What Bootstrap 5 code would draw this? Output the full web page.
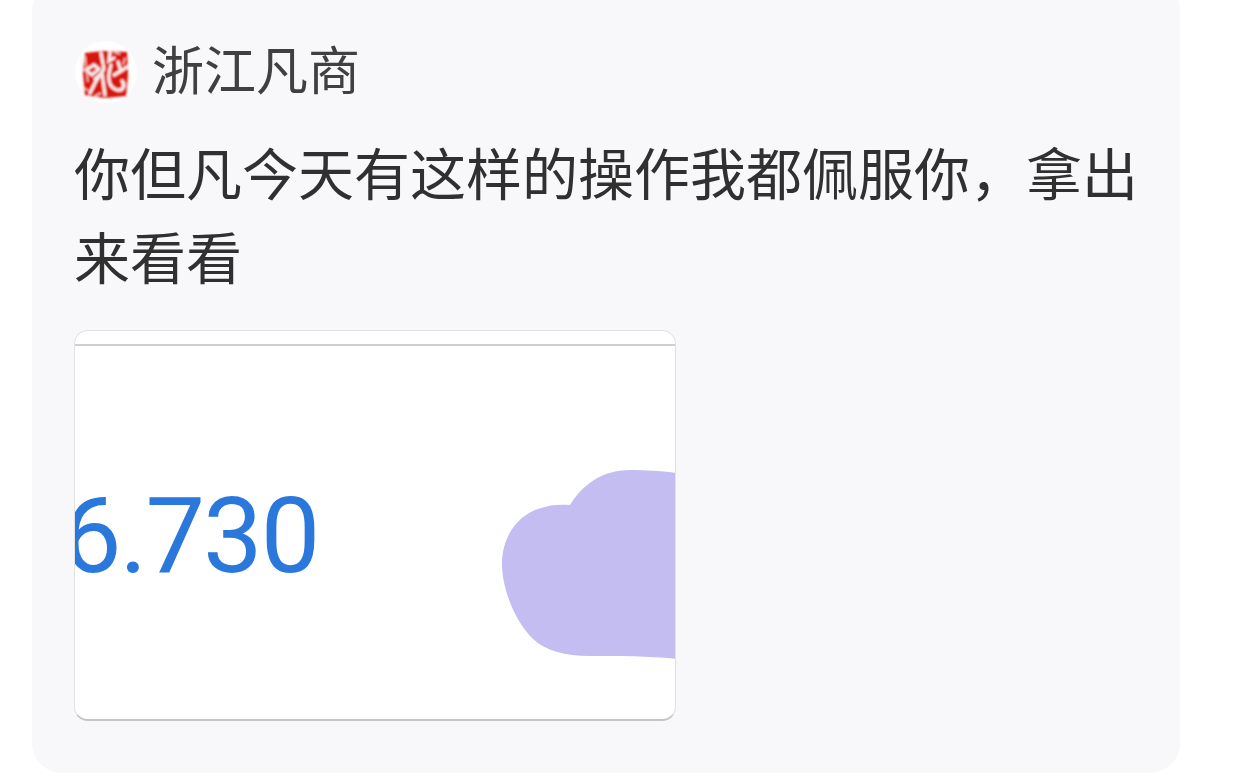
<!DOCTYPE html>
<html lang="zh-CN">
<head>
  <meta charset="UTF-8">
  <meta name="viewport" content="width=device-width, initial-scale=1">
  <title>浙江凡商</title>
  <link href="https://cdn.jsdelivr.net/npm/bootstrap@5.3.2/dist/css/bootstrap.min.css" rel="stylesheet">
  <style>
    html, body { height: 780px; overflow: hidden; }
    body {
      background: #fff;
      font-family: "Liberation Sans", "Noto Sans CJK SC", sans-serif;
      padding-left: 32px;
    }
    .post-panel {
      width: 1148px;
      height: 793px;
      margin-top: -20px;
      padding: 62px 36px 0 44px;
      background: #f8f8fb;
      border-radius: 30px;
    }
    .post-head { height: 60px; gap: 15px; margin-left: -1px; }
    .post-avatar { width: 62px; height: 62px; flex: none; }
    .post-author { font-size: 52px; line-height: 60px; color: #404040; }
    .post-text {
      margin: 32px 0 28px -2px;
      font-size: 56px;
      line-height: 84px;
      color: #303030;
    }
    .post-shot {
      position: relative;
      width: 602px;
      height: 391px;
      margin-left: -2px;
      overflow: hidden;
      background: #fff;
      border: 1px solid #e2e2e6;
      border-bottom: 2px solid #c4c4c6;
      border-radius: 14px;
    }
    .shot-line { height: 2px; margin-top: 13px; background: #cfcfd1; }
    .shot-number {
      position: absolute;
      left: -13px;
      top: 143px;
      font-family: Roboto, sans-serif;
      font-weight: 400;
      font-size: 106px;
      line-height: 125px;
      letter-spacing: -2px;
      color: #2b78dc;
    }
    .shot-cloud { position: absolute; left: 425px; top: 136px; }
  </style>
</head>
<body>

<div class="post-panel">
  <div class="post-head d-flex align-items-center">
    <svg class="post-avatar" viewBox="0 0 62 62">
      <defs><filter id="soft"><feGaussianBlur stdDeviation="0.9"/></filter></defs>
      <circle cx="31" cy="31" r="31" fill="#fefefe"/>
      <g filter="url(#soft)">
        <path d="M10 12L28 10L52 11L53 34L51 55L30 57L10 54L8 32Z" fill="#d9140f"/>
        <path d="M11 29l8-5 5 4-7 6zM26 12l3 16-8 12-6 12M20 38l7-6 3 22M35 11l-1 9 5-3M36 24c-4 13-3 22 6 25 6 1 9-5 5-9M43 21l3 9-7 4M52 26l-6 4" fill="none" stroke="#fbeeec" stroke-width="3.2" stroke-linecap="round"/>
        <path d="M10 15l3 26M50 17l-2 7M20 55l6-3M39 11l6 2M9 47l5 3" stroke="#f6cfcb" stroke-width="1.4"/>
      </g>
    </svg>
    <div class="post-author">浙江凡商</div>
  </div>

  <p class="post-text">你但凡今天有这样的操作我都佩服你，拿出来看看</p>

  <div class="post-shot">
    <div class="shot-line"></div>
    <div class="shot-number">6.730</div>
    <svg class="shot-cloud" width="176" height="194" viewBox="0 0 176 194">
      <path d="M177 6C160 4 148 3 130 3C102 3 82 18 70 38C58 37 50 38 41 41C16 48 1 72 2 100C3 125 16 155 33 172C46 184 66 189 89 189C120 189 150 189 177 192Z" fill="#c3bdf2"/>
    </svg>
  </div>
</div>

<script src="https://cdn.jsdelivr.net/npm/bootstrap@5.3.2/dist/js/bootstrap.bundle.min.js"></script>
</body>
</html>
